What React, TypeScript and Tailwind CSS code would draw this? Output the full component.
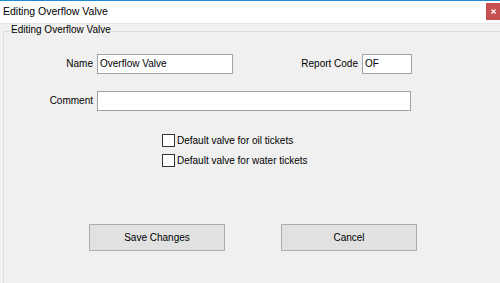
import React from "react";

function Input({ w, value }: { w: string; value?: string }) {
  return (
    <div
      className={`${w} h-[20px] bg-white border border-[#a3a3a3] flex items-center pl-[2px] text-[10px] text-black leading-none`}
    >
      {value}
    </div>
  );
}

function Check({ label }: { label: string }) {
  return (
    <div className="flex items-center h-[13px]">
      <div className="w-[13px] h-[13px] bg-white border border-[#333333]" />
      <span className="ml-[2px] text-[10px] leading-none text-black">{label}</span>
    </div>
  );
}

export default function App() {
  return (
    <div
      className="w-[500px] h-[283px] overflow-hidden bg-[#f0f0f0] flex flex-col"
      style={{ fontFamily: '"Liberation Sans", Arial, sans-serif' }}
    >
      <div className="h-px bg-[#1e8ad6] shrink-0" />
      <div className="h-[22px] bg-white flex items-start justify-between shrink-0">
        <span className="pl-[3px] pt-[5px] text-[10.5px] leading-none text-black">
          Editing Overflow Valve
        </span>
        <div className="mt-[2px] w-[15px] h-[17px] bg-[#c75050] flex items-center justify-center ml-auto -mr-[1px]">
          <svg width="5" height="5" viewBox="0 0 5 5">
            <path d="M0.5 0.5 L4.5 4.5 M4.5 0.5 L0.5 4.5" stroke="white" strokeWidth="1.2" />
          </svg>
        </div>
      </div>
      <div className="h-px bg-[#e3e3e3] shrink-0" />
      <div className="pl-[3px] pt-[7px]">
        <div className="relative w-[540px] h-[300px] border border-[#dcdcdc]">
          <span className="absolute -top-[7px] left-[6px] bg-[#f0f0f0] px-px text-[10px] leading-none text-black">
            Editing Overflow Valve
          </span>
          <div className="pt-[22px] flex flex-col">
            <div className="flex items-center">
              <div className="w-[89px] text-right text-[10px] text-black leading-none">Name</div>
              <div className="ml-[4px]">
                <Input w="w-[136px]" value="Overflow Valve" />
              </div>
              <div className="w-[125px] text-right text-[10px] text-black leading-none">Report Code</div>
              <div className="ml-[4px]">
                <Input w="w-[50px]" value="OF" />
              </div>
            </div>
            <div className="flex items-center mt-[17px]">
              <div className="w-[89px] text-right text-[10px] text-black leading-none">Comment</div>
              <div className="ml-[4px]">
                <Input w="w-[314px]" />
              </div>
            </div>
            <div className="ml-[158px] mt-[23px] flex flex-col gap-[7px]">
              <Check label="Default valve for oil tickets" />
              <Check label="Default valve for water tickets" />
            </div>
            <div className="flex mt-[57px] ml-[85px] gap-[56px]">
              <button className="w-[136px] h-[27px] bg-[#e1e1e1] border border-[#adadad] text-[10px] text-black leading-none">
                Save Changes
              </button>
              <button className="w-[136px] h-[27px] bg-[#e1e1e1] border border-[#adadad] text-[10px] text-black leading-none">
                Cancel
              </button>
            </div>
          </div>
        </div>
      </div>
    </div>
  );
}
